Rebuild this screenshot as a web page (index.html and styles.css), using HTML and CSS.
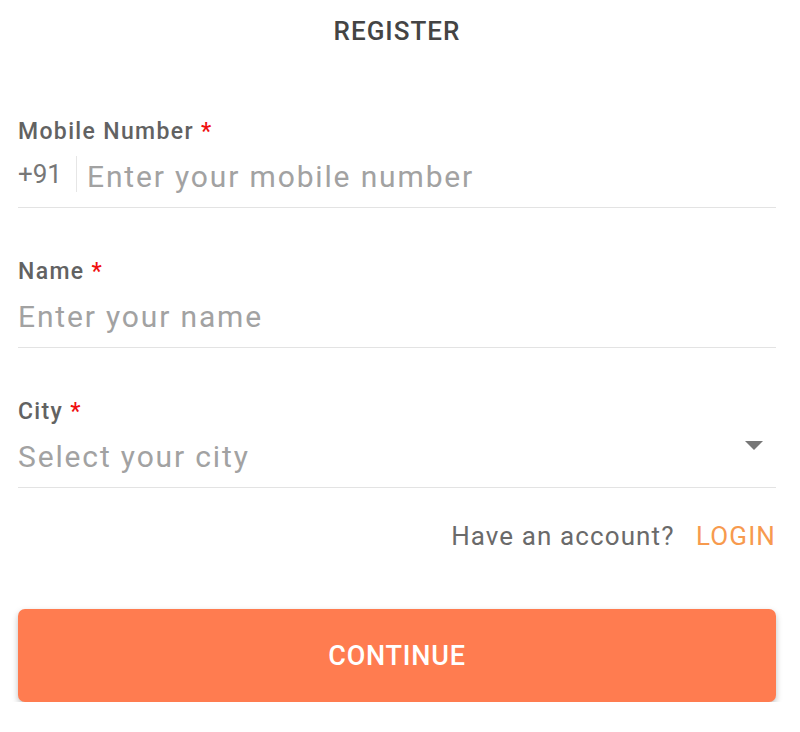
FILE: index.html
```html
<!DOCTYPE html>
<html lang="en">
<head>
    <meta charset="UTF-8">
    <meta name="viewport" content="width=device-width, initial-scale=1.0">
    <title>Register</title>
    <link rel="stylesheet" href="styles.css">
</head>
<body>
    <div class="page">
        <h1 class="title">REGISTER</h1>
        <form class="form" onsubmit="return false">
            <div class="field">
                <label class="label" for="mobile">Mobile Number <span class="req">*</span></label>
                <div class="control">
                    <span class="prefix">+91</span>
                    <input class="input" type="tel" id="mobile" placeholder="Enter your mobile number">
                </div>
            </div>
            <div class="field">
                <label class="label" for="name">Name <span class="req">*</span></label>
                <div class="control">
                    <input class="input" type="text" id="name" placeholder="Enter your name">
                </div>
            </div>
            <div class="field">
                <label class="label" for="city">City <span class="req">*</span></label>
                <div class="control">
                    <div class="select" id="city">Select your city</div>
                    <svg class="caret" width="20" height="10" viewBox="0 0 20 10">
                        <path d="M1 0 L19 0 L10 9 Z" fill="#777"/>
                    </svg>
                </div>
            </div>
            <p class="account">Have an account? <a href="#" class="login">LOGIN</a></p>
            <button class="continue" type="submit">CONTINUE</button>
        </form>
    </div>
</body>
</html>
```

FILE: styles.css
```css
body {
    margin: 0;
    font-family: Roboto, "Liberation Sans", Arial, sans-serif;
    background: #fff;
}
.page {
    width: 758px;
    margin-left: 18px;
}
.title {
    margin: 16px 0 0;
    font-size: 26px;
    line-height: 30px;
    font-weight: 500;
    letter-spacing: 1px;
    color: #444;
    text-align: center;
}
.form {
    display: flex;
    flex-direction: column;
    margin-top: 73px;
}
.field {
    margin-bottom: 51px;
}
.label {
    display: block;
    font-size: 23px;
    line-height: 26px;
    font-weight: 500;
    letter-spacing: 1.35px;
    color: #626262;
}
.req {
    color: #f01010;
}
.control {
    display: flex;
    align-items: center;
    height: 62px;
    border-bottom: 1px solid #e3e3e3;
}
.prefix {
    font-size: 26px;
    color: #777;
    padding-right: 14px;
    margin-right: 10px;
    border-right: 1px solid #e6e6e6;
    line-height: 36px;
    margin-top: -4px;
}
.input,
.select {
    flex: 1;
    border: none;
    outline: none;
    padding: 0;
    font-family: inherit;
    font-size: 30px;
    letter-spacing: 1.85px;
    color: #333;
    background: transparent;
}
.input::placeholder,
.select {
    color: #a2a2a2;
}
.caret {
    align-self: flex-start;
    margin: 16px 12px 0 0;
}
.account {
    margin: -18px 0 0;
    text-align: right;
    font-size: 26px;
    letter-spacing: 1.1px;
    color: #6a6a6a;
}
.login {
    margin-left: 14px;
    color: #f79a4e;
    text-decoration: none;
}
.continue {
    margin-top: 58px;
    height: 93px;
    border: none;
    border-radius: 7px;
    background: #ff7c50;
    color: #fff;
    font-family: inherit;
    font-size: 27px;
    font-weight: 500;
    letter-spacing: 0.8px;
    box-shadow: 0 3px 6px rgba(0, 0, 0, 0.25);
    cursor: pointer;
}
```
